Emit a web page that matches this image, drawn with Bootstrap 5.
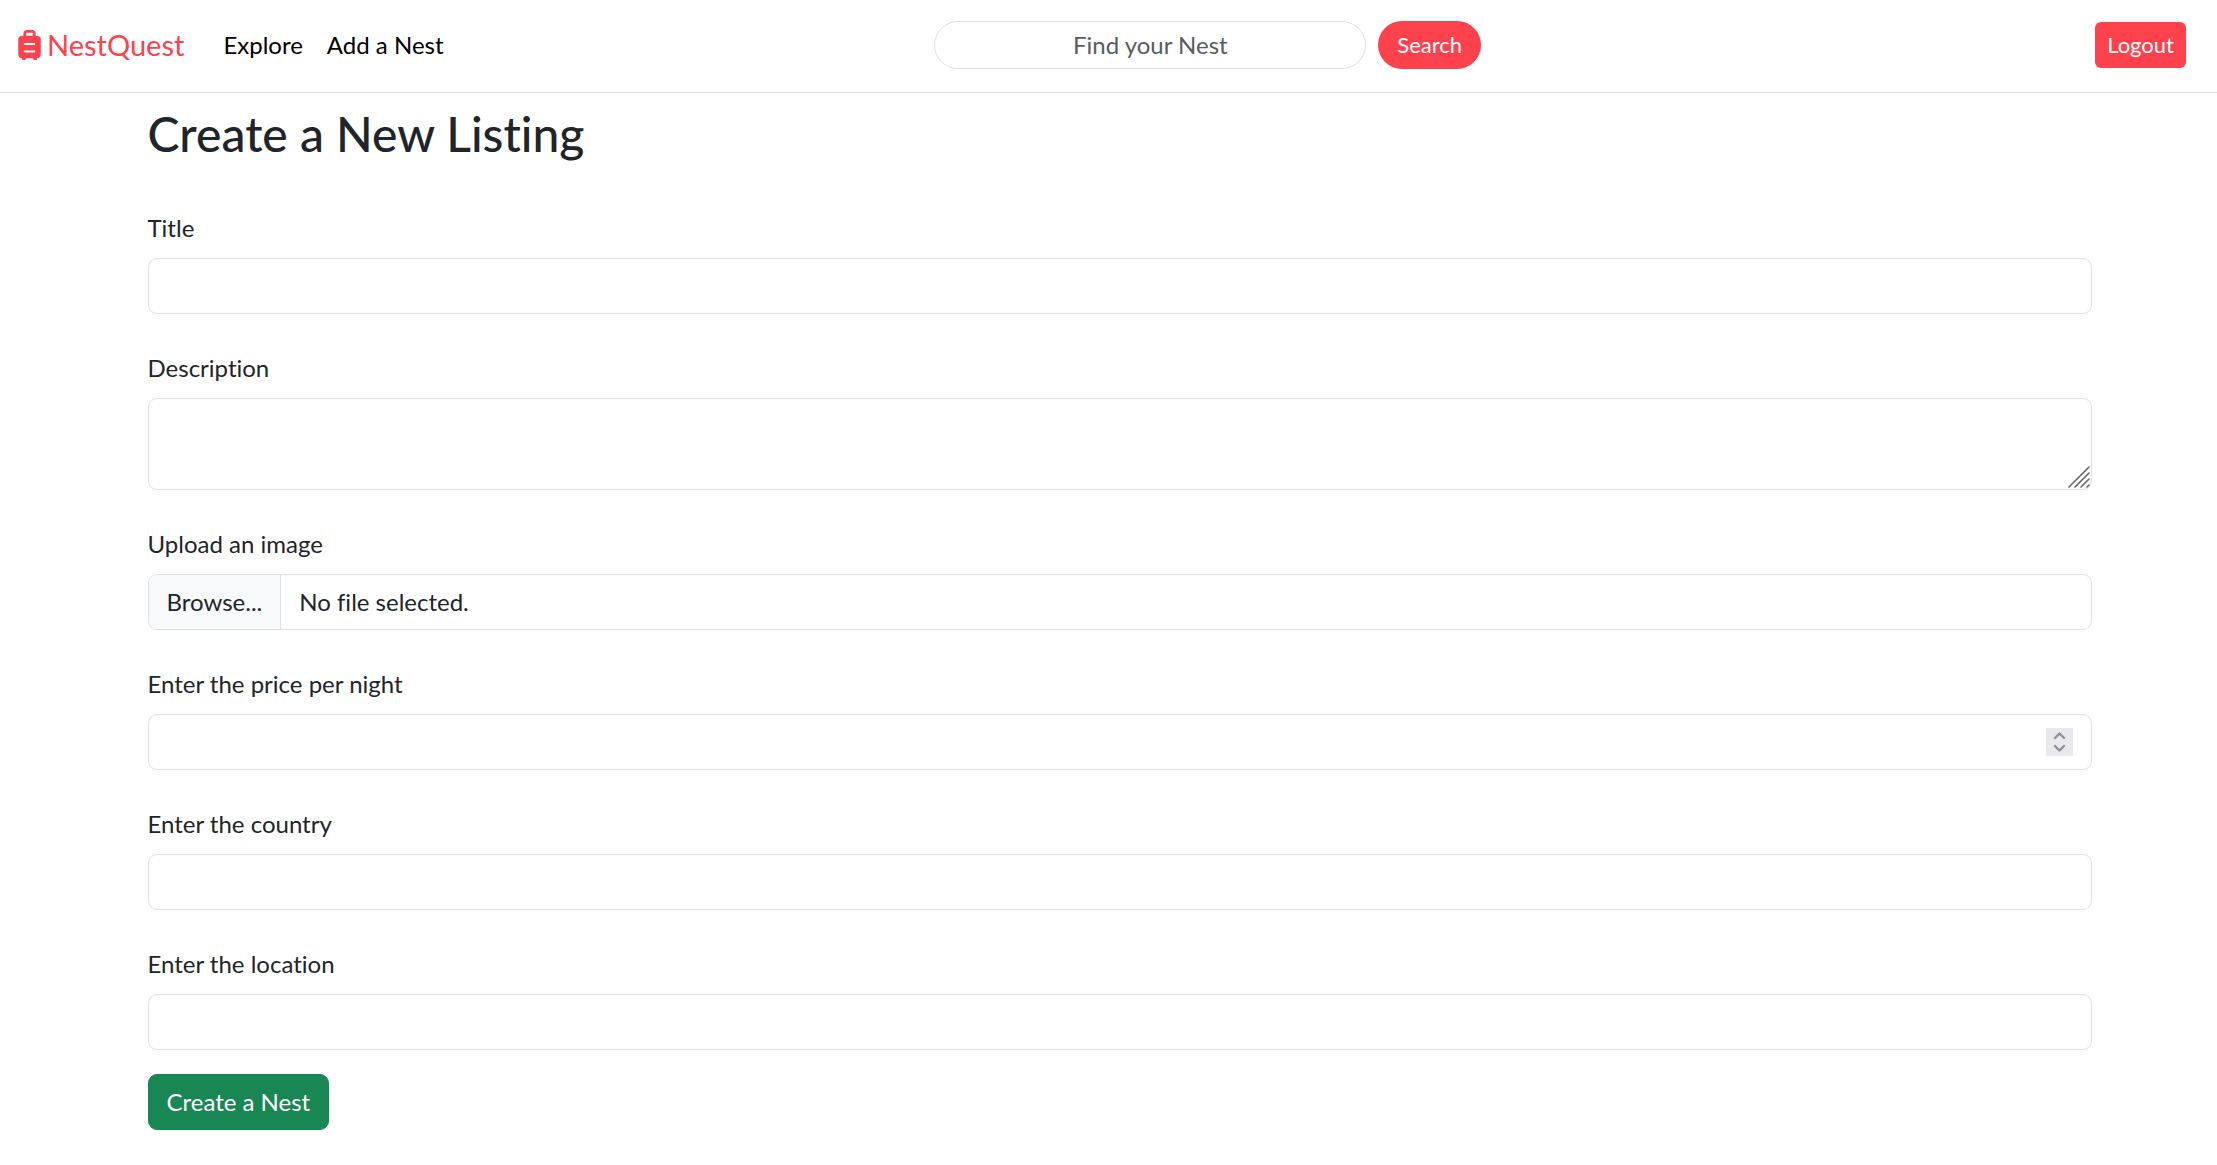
<!DOCTYPE html>
<html lang="en">
<head>
<meta charset="utf-8">
<meta name="viewport" content="width=device-width, initial-scale=1">
<title>NestQuest</title>
<link rel="stylesheet" href="https://cdn.jsdelivr.net/npm/bootstrap@5.3.0/dist/css/bootstrap.min.css">
<style>
  html { font-size: 24px; }
  body { font-family: Lato, "Open Sans", sans-serif; font-variant-ligatures: none; }
  .site-nav { min-height: 93px; padding: 0 31px 3px 18px; }
  .site-nav .navbar-brand, .site-nav .navbar-brand:hover { color: #fe424d; font-size: 29px; margin-right: 27px; }
  .site-nav .nav-link, .site-nav .nav-link:hover { color: #000; padding-left: 13px; padding-right: 13px; }
  .brand-icon { width: 23px; height: 30px; margin-right: 6px; }
  .search-form { gap: 12px; }
  .search-form .form-control { width: 432px; height: 48px; border-radius: 24px; padding: 0 18px; text-align: center; }
  .search-form .form-control::-webkit-search-cancel-button { display: none; }
  .btn-brand, .btn-brand:hover { background: #fe424d; color: #fff; border: 0; font-size: 22px; }
  .btn-search { height: 48px; border-radius: 24px; padding: 0 19px; }
  .btn-logout { height: 46px; border-radius: 6px; padding: 0 12px; }
  .nav-start { flex: 13 1 0; }
  .nav-end { flex: 10 1 0; }
  .listing-page { max-width: 1980px; padding: 12px 7px 24px 29px; }
  .listing-page h1 { font-size: 48px; margin-bottom: 11px; }
  .form-control::placeholder { color: #595c5f; }
  .file-button { background: #f8f9fa; padding: 9px 18px; border-right: 1px solid #dee2e6; }
  .file-name { padding: 9px 18px; }
  .file-input { position: absolute; inset: 0; width: 100%; height: 100%; opacity: 0; }
  textarea.form-control { resize: none; }
  .resize-grip { position: absolute; right: 2px; bottom: 2px; width: 22px; height: 22px; }
  input[type=number] { appearance: textfield; -moz-appearance: textfield; }
  input[type=number]::-webkit-inner-spin-button { display: none; }
  .stepper { position: absolute; right: 19px; top: 14px; width: 27px; height: 28px; background: #e9e9ed; }
</style>
</head>
<body>
<nav class="site-nav navbar navbar-expand bg-white border-bottom">
  <div class="nav-start d-flex align-items-center">
    <a class="navbar-brand d-flex align-items-center py-0" href="#">
      <svg class="brand-icon" viewBox="0 0 384 512" fill="#fe424d" aria-hidden="true">
        <path fill-rule="evenodd" d="M144 0h96c31 0 56 25 56 56v40h24c35 0 64 29 64 64v256c0 35-29 64-64 64v16a16 16 0 0 1-16 16h-32a16 16 0 0 1-16-16v-16H128v16a16 16 0 0 1-16 16H80a16 16 0 0 1-16-16v-16c-35 0-64-29-64-64V160c0-35 29-64 64-64h24V56c0-31 25-56 56-56zm0 48a8 8 0 0 0-8 8v40h112V56a8 8 0 0 0-8-8zM112 220a18 18 0 0 0 0 36h160a18 18 0 0 0 0-36zM112 350a18 18 0 0 0 0 36h160a18 18 0 0 0 0-36z"/>
      </svg>NestQuest</a>
    <div class="navbar-nav">
      <a class="nav-link" href="#">Explore</a>
      <a class="nav-link" href="#">Add a Nest</a>
    </div>
  </div>
  <form class="search-form d-flex">
    <input class="form-control" type="search" placeholder="Find your Nest" aria-label="Find your Nest">
    <button class="btn btn-brand btn-search" type="button">Search</button>
  </form>
  <div class="nav-end d-flex justify-content-end">
    <button class="btn btn-brand btn-logout" type="button">Logout</button>
  </div>
</nav>
<main class="listing-page container">
  <h1 class="pb-4">Create a New Listing</h1>
  <form>
    <div class="mb-4">
      <label class="form-label" for="title">Title</label>
      <input class="form-control" id="title" type="text">
    </div>
    <div class="mb-4">
      <label class="form-label" for="description">Description</label>
      <div class="position-relative">
        <textarea class="form-control d-block" id="description" rows="2"></textarea>
        <svg class="resize-grip" viewBox="0 0 22 22" stroke="#666" stroke-width="1.6" stroke-linecap="round" aria-hidden="true"><path d="M1 21L21 1M7 21L21 7M13 21l8-8M19 21l2-2"/></svg>
      </div>
    </div>
    <div class="mb-4">
      <label class="form-label" for="image">Upload an image</label>
      <div class="form-control p-0 d-flex position-relative overflow-hidden">
        <span class="file-button">Browse...</span>
        <span class="file-name">No file selected.</span>
        <input class="file-input" id="image" type="file">
      </div>
    </div>
    <div class="mb-4">
      <label class="form-label" for="price">Enter the price per night</label>
      <div class="position-relative">
        <input class="form-control" id="price" type="number">
        <svg class="stepper" viewBox="0 0 27 28" fill="none" stroke="#8f8f9d" stroke-width="2.4" stroke-linecap="round" stroke-linejoin="round" aria-hidden="true"><path d="M9 10l4.500-4.500L18 10M9 18l4.500 4.500L18 18"/></svg>
      </div>
    </div>
    <div class="mb-4">
      <label class="form-label" for="country">Enter the country</label>
      <input class="form-control" id="country" type="text">
    </div>
    <div class="mb-3">
      <label class="form-label" for="location">Enter the location</label>
      <input class="form-control" id="location" type="text">
    </div>
    <button class="btn btn-success" type="button">Create a Nest</button>
  </form>
</main>
<script src="https://cdn.jsdelivr.net/npm/bootstrap@5.3.0/dist/js/bootstrap.bundle.min.js"></script>
</body>
</html>
